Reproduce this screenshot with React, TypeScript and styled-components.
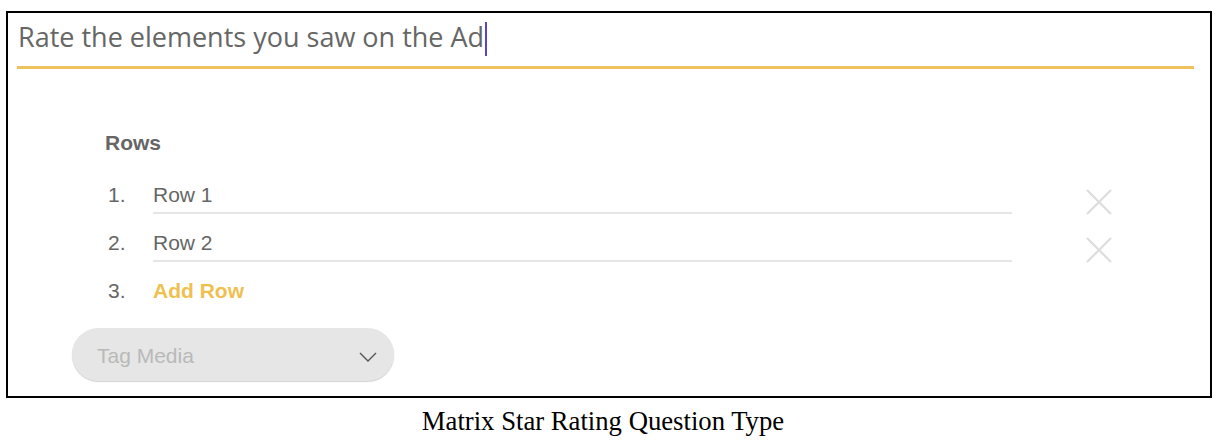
import styled, { createGlobalStyle } from 'styled-components'

const GlobalStyle = createGlobalStyle`
	body {
		margin: 0;
		background: #ffffff;
	}
`

const Page = styled.div`
	width: 1218px;
	height: 444px;
	padding: 11px 0 0 6px;
	box-sizing: border-box;
`

const Frame = styled.div`
	width: 1206px;
	height: 387px;
	box-sizing: border-box;
	border: 2px solid #000000;
	padding: 6px 16px 0 9px;
	display: flex;
	flex-direction: column;
`

const TitleField = styled.div`
	padding: 0 0 10px 1px;
	border-bottom: 3px solid #efc25c;
	font-family: 'Open Sans', sans-serif;
	font-size: 27px;
	line-height: 36px;
	color: #666666;
	white-space: nowrap;
`

const Caret = styled.span`
	display: inline-block;
	width: 2px;
	height: 34px;
	margin-left: 1px;
	background: #5a43c8;
	vertical-align: -9px;
`

const RowsSection = styled.div`
	margin: 62px 0 0 88px;
	font-family: 'Liberation Sans', Arial, sans-serif;
	font-size: 21px;
	line-height: 24px;
	color: #666666;
`

const SectionLabel = styled.div`
	font-weight: bold;
	margin-bottom: 28px;
`

const Row = styled.div`
	display: flex;
	align-items: flex-start;
	height: 48px;
`

const RowNumber = styled.div`
	width: 45px;
	padding-left: 3px;
	flex-shrink: 0;
`

const RowInput = styled.div`
	width: 859px;
	padding-bottom: 5px;
	border-bottom: 2px solid #e6e6e6;
`

const AddRow = styled.div`
	font-weight: bold;
	color: #efc04f;
`

const RemoveButton = styled.svg`
	margin: 6px 0 0 74px;
	flex-shrink: 0;
`

const TagSelect = styled.div`
	margin: 1px 0 0 55px;
	width: 322px;
	height: 53px;
	box-sizing: border-box;
	border-radius: 27px;
	background: #e6e6e6;
	box-shadow: 0 1px 1px #d2d2d2;
	display: flex;
	align-items: center;
	justify-content: space-between;
	padding: 2px 17px 0 25px;
	font-family: 'Liberation Sans', Arial, sans-serif;
	font-size: 21px;
	color: #b9b9b9;
`

const Chevron = styled.svg`
	margin-top: 2px;
`

const Caption = styled.div`
	margin-top: 8px;
	padding-right: 18px;
	text-align: center;
	font-family: 'Liberation Serif', 'Times New Roman', serif;
	font-size: 26.7px;
	line-height: 30px;
	color: #000000;
`

const rows = ['Row 1', 'Row 2']

const App = () => {
	return (
		<>
			<GlobalStyle />
			<Page>
				<Frame>
					<TitleField>
						Rate the elements you saw on the Ad
						<Caret />
					</TitleField>
					<RowsSection>
						<SectionLabel>Rows</SectionLabel>
						{rows.map((row, i) => (
							<Row key={row}>
								<RowNumber>{i + 1}.</RowNumber>
								<RowInput>{row}</RowInput>
								<RemoveButton width="26" height="26" viewBox="0 0 26 26">
									<path
										d="M1 1 L25 25 M25 1 L1 25"
										stroke="#dddddd"
										strokeWidth="2.2"
										fill="none"
									/>
								</RemoveButton>
							</Row>
						))}
						<Row>
							<RowNumber>{rows.length + 1}.</RowNumber>
							<AddRow>Add Row</AddRow>
						</Row>
					</RowsSection>
					<TagSelect>
						<span>Tag Media</span>
						<Chevron width="18" height="10" viewBox="0 0 18 10">
							<path
								d="M1 1 L9 9 L17 1"
								stroke="#555555"
								strokeWidth="1.4"
								fill="none"
							/>
						</Chevron>
					</TagSelect>
				</Frame>
				<Caption>Matrix Star Rating Question Type</Caption>
			</Page>
		</>
	)
}

export default App
